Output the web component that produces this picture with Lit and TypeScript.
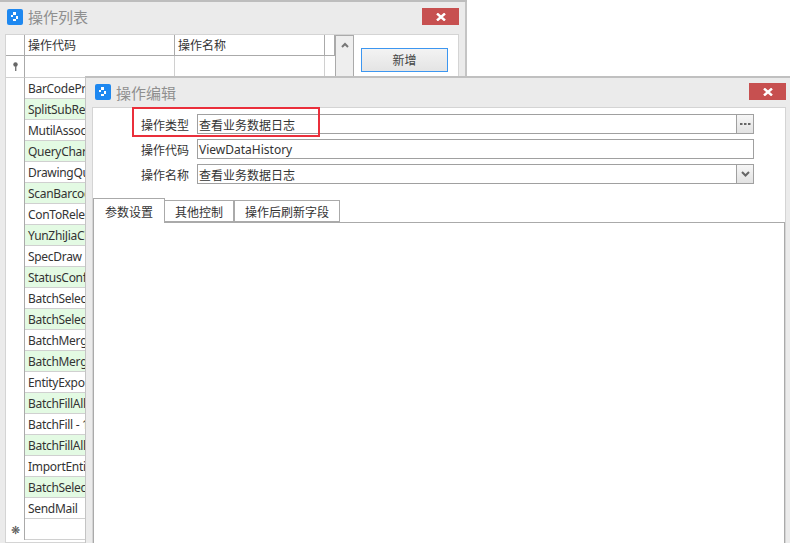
import { LitElement, html, css, svg } from "lit";
import { customElement } from "lit/decorators.js";

const rows = ["BarCodePrint","SplitSubRecord","MutilAssociate","QueryChart","DrawingQuery","ScanBarcode","ConToRelease","YunZhiJiaChat","SpecDraw","StatusConfig","BatchSelect","BatchSelectEdit","BatchMerge","BatchMergeEdit","EntityExport","BatchFillAll","BatchFill - 1","BatchFillAll2","ImportEntity","BatchSelectAdd","SendMail"];

const logo = svg`<svg class="logo" width="16" height="16" viewBox="0 0 16 16"><rect width="16" height="16" rx="2" fill="#1e88f0"/><rect x="6" y="3" width="3" height="3" fill="#fff"/><rect x="4" y="6" width="2" height="2" fill="#fff"/><rect x="9" y="7" width="2" height="3" fill="#fff"/><rect x="6" y="10" width="3" height="2" fill="#fff"/></svg>`;
const closeX = svg`<svg width="10" height="8" viewBox="0 0 10 8"><path d="M1 0.5L9 7.5M9 0.5L1 7.5" stroke="#fff" stroke-width="2.400" fill="none"/></svg>`;

@customElement("app-root")
export class AppRoot extends LitElement {
  static styles = css`
    :host { display: block; width: 790px; height: 543px; position: relative; overflow: hidden; background: #fff;
      font-family: "Noto Sans CJK SC", "Noto Sans", sans-serif; font-size: 12px; color: #333; }
    * { box-sizing: border-box; }
    .top-line { height: 2px; width: 467px; background: #bdbdbd; }
    .window { position: absolute; background: #ebebeb; }
    .back { left: 0; top: 2px; width: 467px; height: 541px; border-right: 2px solid #c4c4c4; padding: 0 6px 0 5px; }
    .front { left: 85px; top: 76px; width: 705px; height: 467px; border-top: 2px solid #c0c0c0; border-left: 1px solid #c4c4c4; padding: 0 4px 0 6px; }
    .title { display: flex; align-items: center; gap: 5px; font-size: 15px; color: #8f8f8f; padding-left: 2px; }
    .back .title { height: 32px; padding-bottom: 3px; }
    .front .title { height: 29px; padding-left: 3px; padding-bottom: 1px; }
    .close { margin-left: auto; width: 37px; height: 17px; background: #c75050; display: flex; align-items: center; justify-content: center; }
    .front .close { margin-top: -1px; }
    .logo { flex: none; }
    .panel { background: #fff; border: 1px solid #d4d4d4; height: calc(100% - 32px); display: flex; }
    .grid { width: 329px; flex: none; display: flex; flex-direction: column; }
    .hdr { display: flex; height: 21px; }
    .hdr .ind { width: 19px; border-right: 1px solid #aaa; border-bottom: 1px solid #aaa; flex: none; }
    .hdr .c { border-right: 1px solid #aaa; border-bottom: 1px solid #aaa; padding-left: 3px; line-height: 20px; flex: none; }
    .c1 { width: 150px; }
    .c2 { width: 150px; }
    .hdr .end { width: 10px; border-right: 1px solid #aaa; border-bottom: 1px solid #aaa; flex: none; }
    .filter { display: flex; height: 22px; }
    .filter .ind { width: 19px; display: flex; justify-content: center; align-items: center; border-right: 1px solid #aaa; border-bottom: 1px solid #d0d0d0; flex: none; }
    .filter .c { border-right: 1px solid #d0d0d0; border-bottom: 1px solid #d0d0d0; flex: none; }
    .row { display: flex; height: 21px; }
    .row .ind { width: 19px; border-right: 1px solid #aaa; font-size: 11px; line-height: 20px; text-align: center; color: #555; flex: none; }
    .row .c { width: 150px; flex: none; border-bottom: 1px solid #d0d0d0; border-right: 1px solid #d0d0d0; padding-left: 3px; line-height: 21px; white-space: nowrap; overflow: hidden; font-family: "Noto Sans", sans-serif; font-size: 12px; letter-spacing: -0.3px; color: #333; }
    .row.alt .c { background: #e3fae3; }
    .scroll { width: 19px; flex: none; background: #eee; border-top: 1px solid #aaa; border-left: 1px solid #aaa; border-right: 1px solid #aaa; display: flex; justify-content: center; padding-top: 6px; }
    .side { flex: 1; padding: 13px 0 0 7px; }
    .btn { width: 87px; height: 24px; border: 1px solid #3c96f0; background: linear-gradient(#f3f3f3, #e4e4e4); font-size: 12px; text-align: center; line-height: 22px; color: #444; }
    .content { background: #fff; border: 1px solid #d4d4d4; border-bottom: 0; height: calc(100% - 29px); display: flex; flex-direction: column; }
    .fields { display: flex; flex-direction: column; gap: 5px; padding: 6px 31px 0 0; }
    .field { display: flex; align-items: center; height: 20px; gap: 8px; }
    .label { width: 96px; text-align: right; font-size: 12px; color: #333; }
    .input { flex: 1; height: 20px; border: 1px solid #a0a0a0; display: flex; align-items: center; padding-left: 1px; }
    .input span { flex: 1; font-size: 12px; color: #333; }
    .input span.latin { font-family: "Noto Sans", sans-serif; }
    .ibtn { width: 17px; height: 18px; border-left: 1px solid #a0a0a0; background: linear-gradient(#f6f6f6, #e2e2e2); display: flex; align-items: center; justify-content: center; }
    .tabs { display: flex; align-items: flex-start; margin: 14px 0 -1px; height: 25px; position: relative; z-index: 1; }
    .tab { border: 1px solid #aaa; margin-top: 2px; height: 22px; line-height: 22px; text-align: center; font-size: 12px; color: #333; background: #fff; flex: none; }
    .tab.on { margin-top: 0; border-bottom: 0; height: 25px; width: 72px; padding-top: 1px; line-height: 24px; }
    .t2 { width: 69px; border-left: 0; }
    .t3 { width: 106px; }
    .tabbody { flex: 1; border: 1px solid #aaa; border-bottom: 0; }
    .mark { position: absolute; left: 132px; top: 107px; width: 188px; height: 30px; border: 2px solid #ea2f3b; z-index: 2; }
  `;

  render() {
    return html`
      <div class="top-line"></div>
      <div class="window back">
        <div class="title">${logo}<span>操作列表</span><div class="close">${closeX}</div></div>
        <div class="panel">
          <div class="grid">
            <div class="hdr"><div class="ind"></div><div class="c c1">操作代码</div><div class="c c2">操作名称</div><div class="end"></div></div>
            <div class="filter"><div class="ind"><svg width="7" height="9" viewBox="0 0 7 9"><circle cx="3.5" cy="2.5" r="2.2" fill="#666"/><rect x="3" y="4" width="1.4" height="5" fill="#777"/></svg></div><div class="c c1"></div><div class="c c2"></div></div>
            ${rows.map((r, i) => html`<div class="row ${i % 2 ? "alt" : ""}"><div class="ind"></div><div class="c">${r}</div></div>`)}
            <div class="row"><div class="ind">❋</div><div class="c"></div></div>
          </div>
          <div class="scroll"><svg width="8" height="6" viewBox="0 0 8 6"><path d="M1 5L4 2L7 5" stroke="#777" stroke-width="2" fill="none"/></svg></div>
          <div class="side"><div class="btn">新增</div></div>
        </div>
      </div>
      <div class="window front">
        <div class="title">${logo}<span>操作编辑</span><div class="close">${closeX}</div></div>
        <div class="content">
          <div class="fields">
            <div class="field"><div class="label">操作类型</div><div class="input"><span>查看业务数据日志</span><div class="ibtn"><svg width="11" height="3" viewBox="0 0 11 3"><path d="M0 0h2.500v2h-2.500zM4 0h2.500v2h-2.500zM8 0h2.500v2h-2.500z" fill="#666"/></svg></div></div></div>
            <div class="field"><div class="label">操作代码</div><div class="input"><span class="latin">ViewDataHistory</span></div></div>
            <div class="field"><div class="label">操作名称</div><div class="input"><span>查看业务数据日志</span><div class="ibtn"><svg width="9" height="6" viewBox="0 0 9 6"><path d="M1 1L4.500 4.500L8 1" stroke="#666" stroke-width="2" fill="none"/></svg></div></div></div>
          </div>
          <div class="tabs"><div class="tab on">参数设置</div><div class="tab t2">其他控制</div><div class="tab t3">操作后刷新字段</div></div>
          <div class="tabbody"></div>
        </div>
      </div>
      <div class="mark"></div>
    `;
  }
}
